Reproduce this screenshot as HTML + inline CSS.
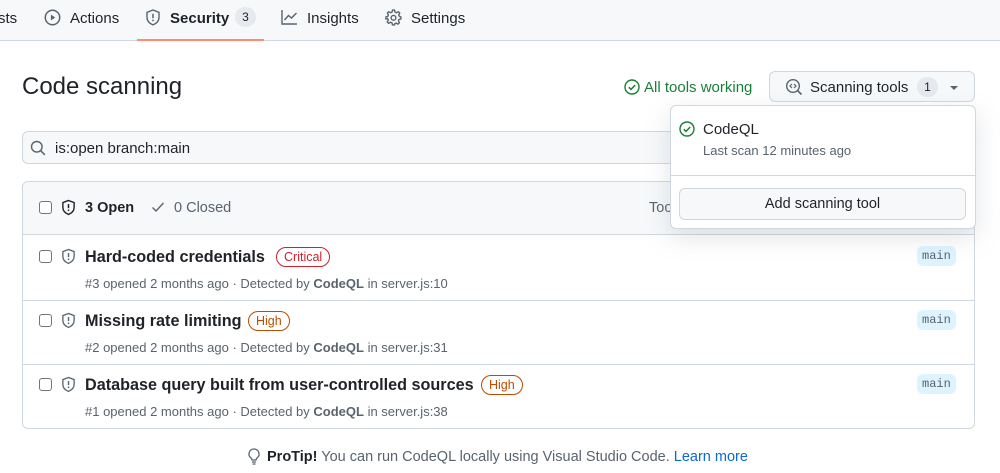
<!DOCTYPE html>
<html><head><meta charset="utf-8"><style>
*{box-sizing:border-box;margin:0;padding:0}
body{width:1000px;height:473px;overflow:hidden;background:#fff;font-family:"Liberation Sans",sans-serif;color:#1f2328;position:relative}
.a{position:absolute;white-space:nowrap}
svg{display:block}
.nav{left:0;top:0;width:1000px;height:41px;background:#f6f8fa;border-bottom:1px solid #d0d7de}
.nt{font-size:15px;top:10px;color:#1f2328}
.cb{width:13px;height:13px;border:1px solid #6e7781;border-radius:3px;background:#fff}
.ttl{font-size:16.2px;font-weight:bold}
.meta{font-size:13px;color:#59636e}
.meta b{color:#59636e}
.lbl{font-size:12.5px;border:1px solid;border-radius:12px;padding:1px 7px;line-height:16px}
.main{font-family:"Liberation Mono",monospace;font-size:12px;background:#ddf4ff;color:#59636e;border-radius:6px;padding:2px 5px;line-height:16px}
.row{left:22px;width:953px;border-top:1px solid #d0d7de}
</style></head><body>
<div class="a nav"></div>
<div class="a nt" style="left:-2px">sts</div>
<svg class="a" style="left:44px;top:9px" width="17" height="17" viewBox="0 0 16 16"><circle cx="8" cy="8" r="6.8" fill="none" stroke="#59636e" stroke-width="1.4"/><path d="M6.5 5.3v5.4L10.6 8z" fill="#59636e"/></svg>
<div class="a nt" style="left:70px">Actions</div>
<svg class="a" style="left:145px;top:9px" width="16" height="17" viewBox="0 0 16 17"><path d="M8 1L2 3.3v5c0 3.6 2.6 6.2 6 7.6 3.4-1.4 6-4 6-7.6v-5z" fill="none" stroke="#59636e" stroke-width="1.4"/><path d="M8 4.8v4.4" stroke="#59636e" stroke-width="1.5"/><circle cx="8" cy="11.4" r=".9" fill="#59636e"/></svg>
<div class="a nt" style="left:170px;font-weight:bold">Security</div>
<div class="a" style="left:235px;top:7px;width:21px;height:20px;border-radius:10px;background:#e6e9ed;font-size:12px;text-align:center;line-height:20px">3</div>
<div class="a" style="left:137px;top:39px;width:127px;height:2px;background:#fd8c73"></div>
<svg class="a" style="left:281px;top:9px" width="17" height="16" viewBox="0 0 17 16"><path d="M1 1v14h15" fill="none" stroke="#59636e" stroke-width="1.4"/><path d="M3.5 11l4-4.5 3 2.5 5-5" fill="none" stroke="#59636e" stroke-width="1.4"/></svg>
<div class="a nt" style="left:307px">Insights</div>
<svg class="a" style="left:385px;top:9px" width="17" height="17" viewBox="0 0 16 16"><path d="M7 1h2l.4 1.8 1.5.7 1.6-1 1.4 1.4-1 1.6.7 1.5L15 7.4v2l-1.8.4-.6 1.5 1 1.6-1.4 1.4-1.6-1-1.5.6L9 15H7l-.4-1.9-1.5-.6-1.6 1-1.4-1.4 1-1.6-.6-1.5L.8 9.4v-2l1.8-.4.6-1.5-1-1.6L3.6 2.5l1.6 1 1.5-.7z" fill="none" stroke="#59636e" stroke-width="1.3" stroke-linejoin="round"/><circle cx="8" cy="8.3" r="2.2" fill="none" stroke="#59636e" stroke-width="1.3"/></svg>
<div class="a nt" style="left:411px">Settings</div>

<div class="a" style="left:22px;top:73px;font-size:24px">Code scanning</div>
<svg class="a" style="left:624px;top:79px" width="16" height="16" viewBox="0 0 16 16"><circle cx="8" cy="8" r="7" fill="none" stroke="#1a7f37" stroke-width="1.4"/><path d="M4.8 8.2l2.2 2.2 4.2-4.4" fill="none" stroke="#1a7f37" stroke-width="1.5"/></svg>
<div class="a" style="left:644px;top:79px;font-size:15px;color:#1a7f37">All tools working</div>
<div class="a" style="left:769px;top:71px;width:206px;height:31px;background:#f6f8fa;border:1px solid #d0d7de;border-radius:6px"></div>
<svg class="a" style="left:785px;top:78px" width="18" height="18" viewBox="0 0 18 18"><circle cx="8" cy="8" r="6.3" fill="none" stroke="#59636e" stroke-width="1.4"/><path d="M12.5 12.5l4 4" stroke="#59636e" stroke-width="1.6"/><path d="M7 6L5 8l2 2M9 6l2 2-2 2" fill="none" stroke="#59636e" stroke-width="1.2"/></svg>
<div class="a" style="left:810px;top:79px;font-size:15px">Scanning tools</div>
<div class="a" style="left:917px;top:77px;width:21px;height:20px;border-radius:10px;background:#e6e9ed;font-size:12px;text-align:center;line-height:20px">1</div>
<div class="a" style="left:950px;top:86px;width:0;height:0;border-left:4px solid transparent;border-right:4px solid transparent;border-top:4px solid #59636e"></div>

<div class="a" style="left:22px;top:131px;width:953px;height:33px;background:#f6f8fa;border:1px solid #d0d7de;border-radius:6px"></div>
<svg class="a" style="left:30px;top:140px" width="16" height="16" viewBox="0 0 16 16"><circle cx="6.8" cy="6.8" r="5.3" fill="none" stroke="#59636e" stroke-width="1.4"/><path d="M10.8 10.8l4 4" stroke="#59636e" stroke-width="1.5"/></svg>
<div class="a" style="left:55px;top:140px;font-size:15px;color:#1f2328">is:open branch:main</div>

<div class="a" style="left:22px;top:181px;width:953px;height:248px;border:1px solid #d0d7de;border-radius:6px;overflow:hidden"><div style="height:53px;background:#f6f8fa;border-bottom:1px solid #d0d7de"></div></div>
<div class="a cb" style="left:39px;top:201px"></div>
<svg class="a" style="left:61px;top:199px" width="15" height="17" viewBox="0 0 16 17"><path d="M8 1L2 3.3v5c0 3.6 2.6 6.2 6 7.6 3.4-1.4 6-4 6-7.6v-5z" fill="none" stroke="#1f2328" stroke-width="1.5"/><path d="M8 4.8v4.4" stroke="#1f2328" stroke-width="1.6"/><circle cx="8" cy="11.4" r=".9" fill="#1f2328"/></svg>
<div class="a" style="left:85px;top:200px;font-size:14.5px;font-weight:bold">3 Open</div>
<svg class="a" style="left:151px;top:201px" width="14" height="12" viewBox="0 0 14 12"><path d="M1.5 6.5l3.5 3.5 7.5-8" fill="none" stroke="#59636e" stroke-width="1.4"/></svg>
<div class="a" style="left:174px;top:200px;font-size:14.5px;color:#59636e">0 Closed</div>
<div class="a" style="left:649px;top:200px;font-size:14.5px;color:#59636e">Tool</div>

<!-- rows -->
<div class="a cb" style="left:39px;top:250px"></div>
<svg class="a" style="left:61px;top:248px" width="15" height="17" viewBox="0 0 16 17"><path d="M8 1L2 3.3v5c0 3.6 2.6 6.2 6 7.6 3.4-1.4 6-4 6-7.6v-5z" fill="none" stroke="#59636e" stroke-width="1.4"/><path d="M8 4.8v4.4" stroke="#59636e" stroke-width="1.5"/><circle cx="8" cy="11.4" r=".9" fill="#59636e"/></svg>
<div class="a ttl" style="left:85px;top:248px">Hard-coded credentials</div>
<div class="a lbl" style="left:276px;top:247px;color:#cf222e;border-color:#cf222e">Critical</div>
<div class="a meta" style="left:85px;top:276px">#3 opened 2 months ago · Detected by <b>CodeQL</b> in server.js:10</div>
<div class="a main" style="left:917px;top:246px">main</div>

<div class="a row" style="top:300px"></div>
<div class="a cb" style="left:39px;top:314px"></div>
<svg class="a" style="left:61px;top:312px" width="15" height="17" viewBox="0 0 16 17"><path d="M8 1L2 3.3v5c0 3.6 2.6 6.2 6 7.6 3.4-1.4 6-4 6-7.6v-5z" fill="none" stroke="#59636e" stroke-width="1.4"/><path d="M8 4.8v4.4" stroke="#59636e" stroke-width="1.5"/><circle cx="8" cy="11.4" r=".9" fill="#59636e"/></svg>
<div class="a ttl" style="left:85px;top:312px">Missing rate limiting</div>
<div class="a lbl" style="left:248px;top:311px;color:#bc4c00;border-color:#bc4c00">High</div>
<div class="a meta" style="left:85px;top:340px">#2 opened 2 months ago · Detected by <b>CodeQL</b> in server.js:31</div>
<div class="a main" style="left:917px;top:310px">main</div>

<div class="a row" style="top:364px"></div>
<div class="a cb" style="left:39px;top:378px"></div>
<svg class="a" style="left:61px;top:376px" width="15" height="17" viewBox="0 0 16 17"><path d="M8 1L2 3.3v5c0 3.6 2.6 6.2 6 7.6 3.4-1.4 6-4 6-7.6v-5z" fill="none" stroke="#59636e" stroke-width="1.4"/><path d="M8 4.8v4.4" stroke="#59636e" stroke-width="1.5"/><circle cx="8" cy="11.4" r=".9" fill="#59636e"/></svg>
<div class="a ttl" style="left:85px;top:376px">Database query built from user-controlled sources</div>
<div class="a lbl" style="left:481px;top:375px;color:#bc4c00;border-color:#bc4c00">High</div>
<div class="a meta" style="left:85px;top:404px">#1 opened 2 months ago · Detected by <b>CodeQL</b> in server.js:38</div>
<div class="a main" style="left:917px;top:374px">main</div>

<!-- dropdown -->
<div class="a" style="left:670px;top:105px;width:306px;height:124px;background:#fff;border:1px solid #d0d7de;border-radius:6px;box-shadow:0 8px 24px rgba(140,149,159,.25)"></div>
<div class="a" style="left:671px;top:175px;width:304px;height:1px;background:#d0d7de"></div>
<svg class="a" style="left:679px;top:121px" width="16" height="16" viewBox="0 0 16 16"><circle cx="8" cy="8" r="7" fill="none" stroke="#1a7f37" stroke-width="1.4"/><path d="M4.8 8.2l2.2 2.2 4.2-4.4" fill="none" stroke="#1a7f37" stroke-width="1.5"/></svg>
<div class="a" style="left:703px;top:121px;font-size:15px">CodeQL</div>
<div class="a" style="left:703px;top:143px;font-size:13px;color:#59636e">Last scan 12 minutes ago</div>
<div class="a" style="left:679px;top:188px;width:287px;height:32px;background:#f6f8fa;border:1px solid #d0d7de;border-radius:6px;font-size:14.5px;text-align:center;line-height:31px">Add scanning tool</div>

<svg class="a" style="left:248px;top:448px" width="12" height="17" viewBox="0 0 12 17"><path d="M6 1a5 5 0 0 0-3 9c.7.6 1 1.3 1 2h4c0-.7.3-1.4 1-2A5 5 0 0 0 6 1zM4 14h4M4.5 16h3" fill="none" stroke="#59636e" stroke-width="1.3"/></svg>
<div class="a" style="left:267px;top:449px;font-size:14.5px;color:#59636e"><b style="color:#1f2328">ProTip!</b> You can run CodeQL locally using Visual Studio Code. <span style="color:#0969da">Learn more</span></div>
</body></html>
